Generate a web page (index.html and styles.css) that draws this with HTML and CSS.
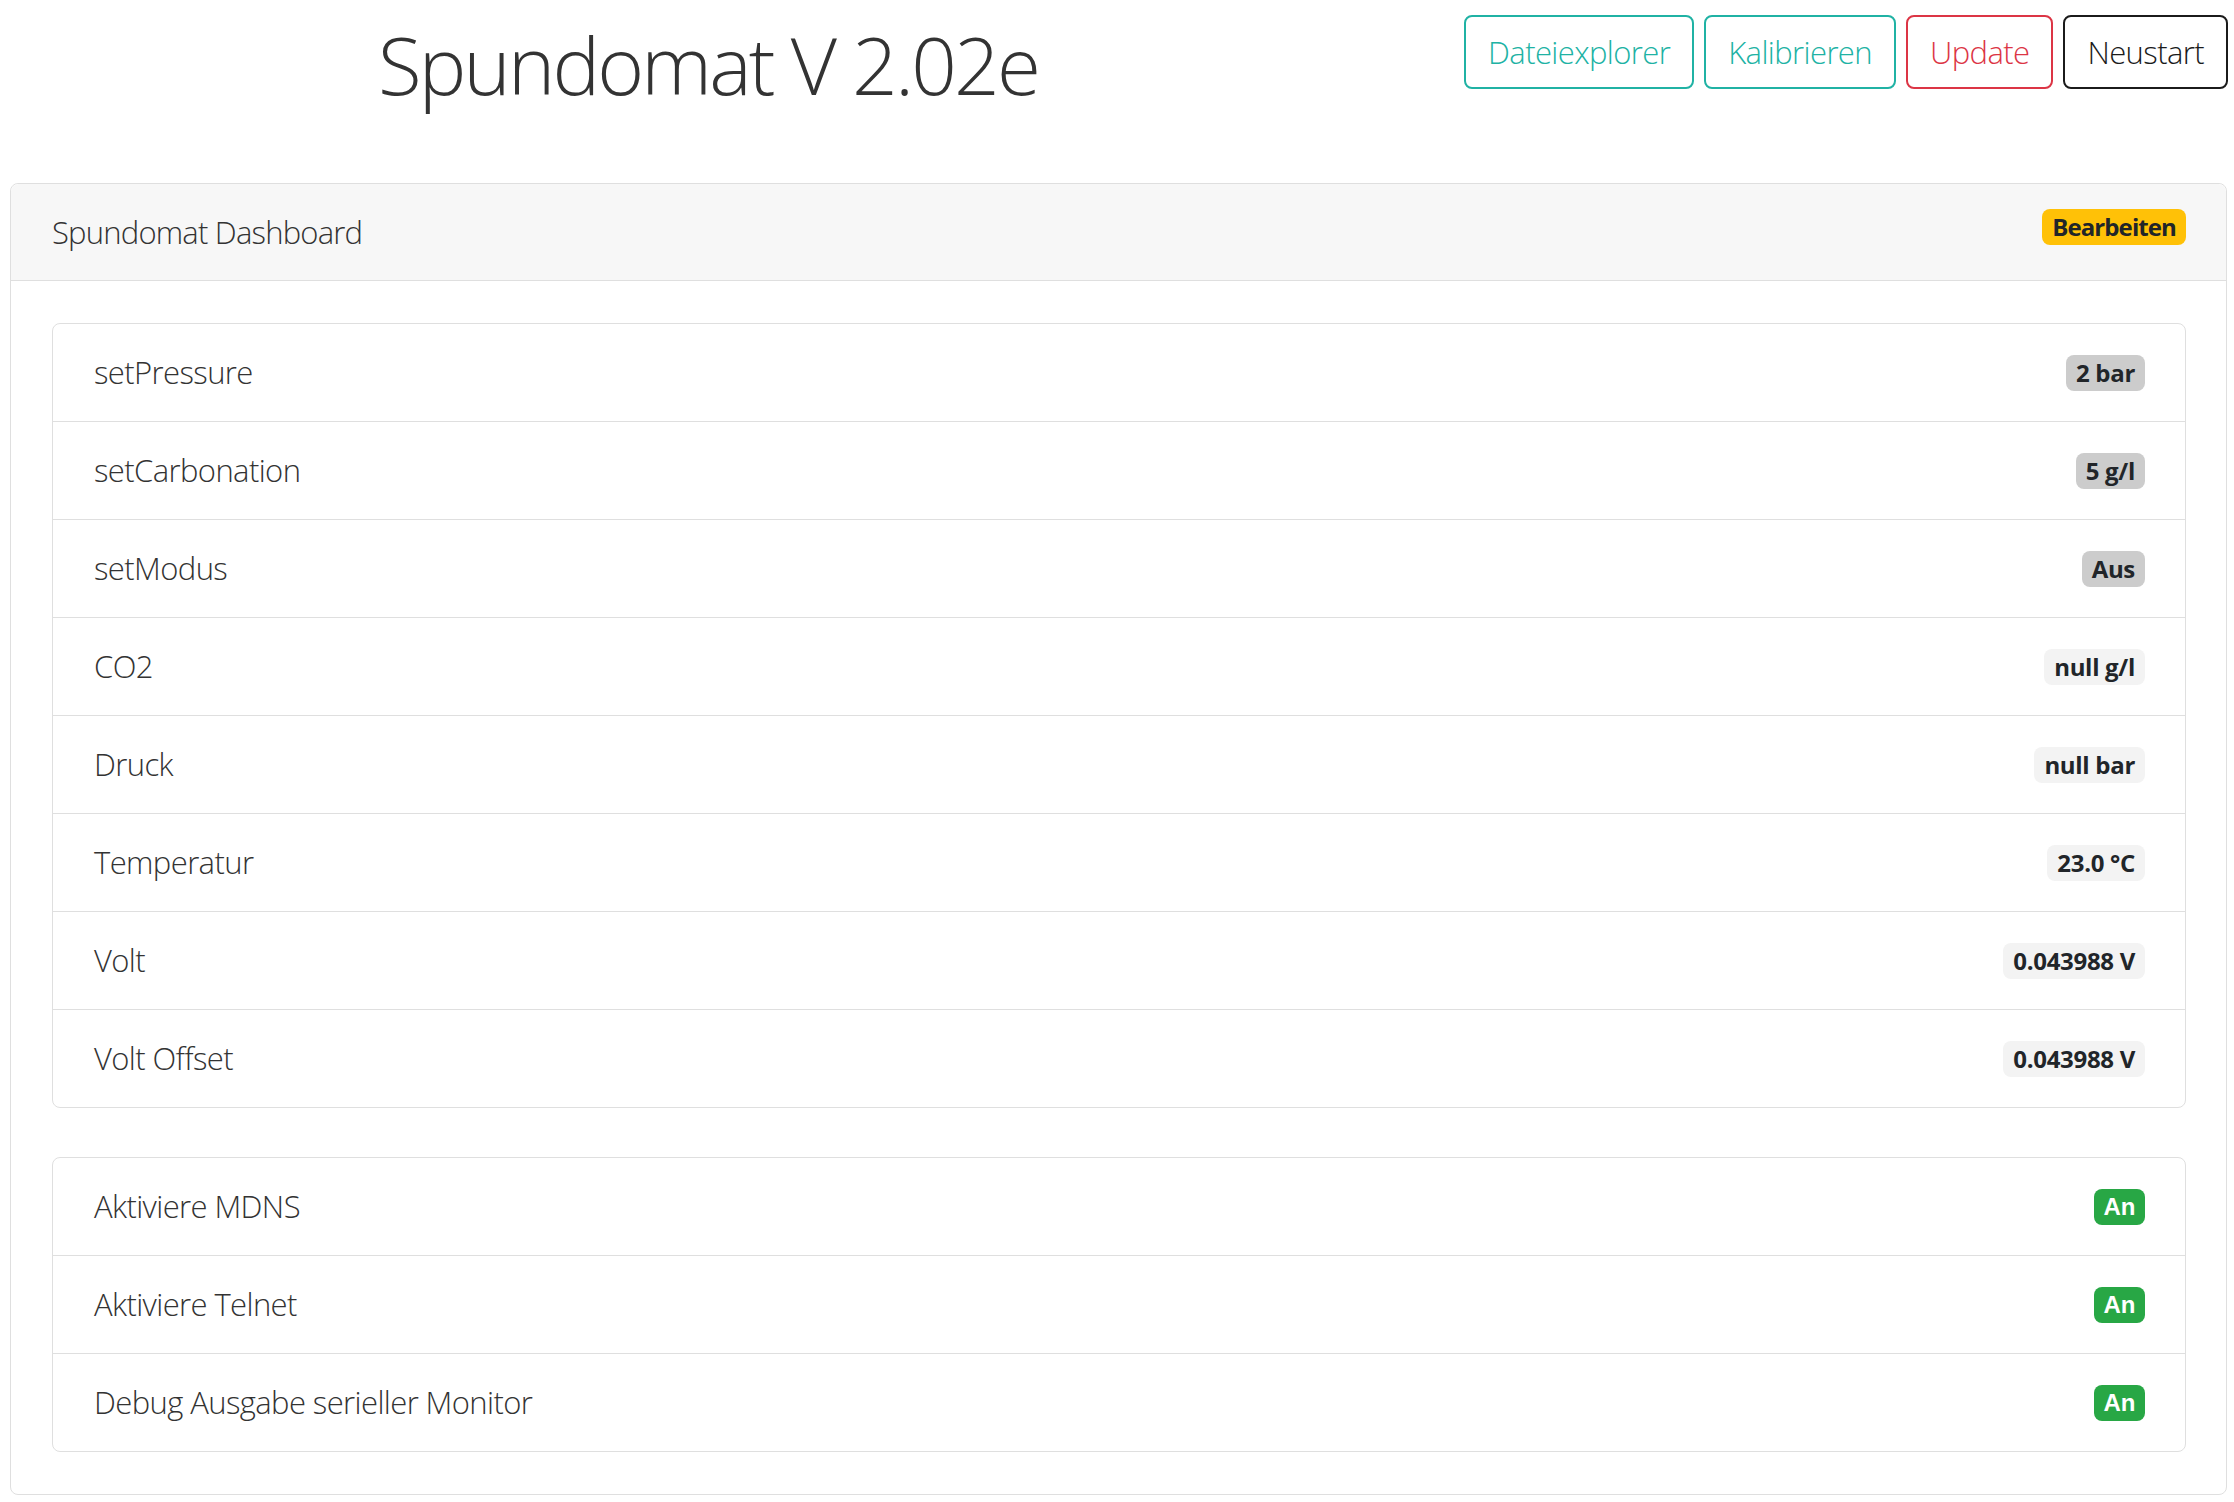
FILE: index.html
```html
<!DOCTYPE html>
<html lang="de">
<head>
<meta charset="utf-8">
<title>Spundomat V 2.02e</title>
<link rel="stylesheet" href="styles.css">
</head>
<body>
<div class="page">
  <header class="topbar">
    <h1 class="title">Spundomat V 2.02e</h1>
    <nav class="actions">
      <button class="btn btn-teal">Dateiexplorer</button>
      <button class="btn btn-teal">Kalibrieren</button>
      <button class="btn btn-red">Update</button>
      <button class="btn btn-dark">Neustart</button>
    </nav>
  </header>

  <section class="card">
    <div class="card-header">
      <span class="card-title">Spundomat Dashboard</span>
      <span class="badge badge-warning">Bearbeiten</span>
    </div>
    <div class="card-body">
      <ul class="list">
        <li class="item"><span class="label">setPressure</span><span class="badge badge-gray">2 bar</span></li>
        <li class="item"><span class="label">setCarbonation</span><span class="badge badge-gray">5 g/l</span></li>
        <li class="item"><span class="label">setModus</span><span class="badge badge-gray">Aus</span></li>
        <li class="item"><span class="label">CO2</span><span class="badge badge-light">null g/l</span></li>
        <li class="item"><span class="label">Druck</span><span class="badge badge-light">null bar</span></li>
        <li class="item"><span class="label">Temperatur</span><span class="badge badge-light">23.0 °C</span></li>
        <li class="item"><span class="label">Volt</span><span class="badge badge-light">0.043988 V</span></li>
        <li class="item"><span class="label">Volt Offset</span><span class="badge badge-light">0.043988 V</span></li>
      </ul>
      <ul class="list list-second">
        <li class="item"><span class="label">Aktiviere MDNS</span><span class="badge badge-success">An</span></li>
        <li class="item"><span class="label">Aktiviere Telnet</span><span class="badge badge-success">An</span></li>
        <li class="item"><span class="label">Debug Ausgabe serieller Monitor</span><span class="badge badge-success">An</span></li>
      </ul>
    </div>
  </section>
</div>
</body>
</html>
```

FILE: styles.css
```css
* { box-sizing: border-box; }

html, body {
  margin: 0;
  padding: 0;
  background: #ffffff;
}

body {
  font-family: "Open Sans", "Noto Sans", sans-serif;
  font-weight: 300;
  color: #333333;
  font-size: 31px;
}

.page {
  padding: 0 6px 0 10px;
}

/* ---------- top bar ---------- */
.topbar {
  display: flex;
  align-items: flex-start;
  padding-top: 15px;
}

.title {
  width: 1396px;
  margin: 1px 0 71px;
  text-align: center;
  font-size: 80px;
  font-weight: 300;
  line-height: 96px;
  letter-spacing: -2.8px;
  color: #333333;
}

.actions {
  flex: 1;
  display: flex;
  justify-content: flex-end;
  gap: 10px;
}

.btn {
  font-family: "Open Sans", "Noto Sans", sans-serif;
  font-weight: 300;
  font-size: 31px;
  line-height: 48px;
  letter-spacing: -0.6px;
  padding: 11px 22px;
  background: #ffffff;
  border: 2px solid currentColor;
  border-radius: 8px;
}

.btn-teal { color: #20b2a4; }
.btn-red { color: #dc3545; }
.btn-dark { color: #1b1b1b; }

/* ---------- card ---------- */
.card {
  margin-right: 1px;
  border: 1px solid #dfdfdf;
  border-radius: 8px;
  background: #ffffff;
}

.card-header {
  display: flex;
  justify-content: space-between;
  align-items: flex-start;
  padding: 24px 40px 24px 41px;
  line-height: 48px;
  background: #f7f7f7;
  border-bottom: 1px solid #dfdfdf;
  border-radius: 8px 8px 0 0;
}

.card-title {
  letter-spacing: -0.8px;
}

.card-body {
  padding: 42px 40px 42px 41px;
}

.list {
  list-style: none;
  margin: 0;
  padding: 0;
  border: 1px solid #dfdfdf;
  border-radius: 8px;
}

.list-second {
  margin-top: 49px;
}

.item {
  display: flex;
  justify-content: space-between;
  align-items: center;
  padding: 24px 40px 24px 41px;
  line-height: 49px;
}

.item + .item {
  border-top: 1px solid #dfdfdf;
}

.label {
  letter-spacing: -0.6px;
}

/* ---------- badges ---------- */
.badge {
  display: inline-block;
  font-family: "Open Sans", "Noto Sans", sans-serif;
  font-weight: 700;
  font-size: 24px;
  line-height: 24px;
  letter-spacing: -0.3px;
  padding: 6px 10px;
  border-radius: 8px;
  color: #212529;
  white-space: nowrap;
}

.badge-warning {
  background: #ffc107;
  letter-spacing: -0.9px;
  margin-top: 1px;
}
.badge-gray { background: #cccccc; }
.badge-light { background: #f3f3f3; }

.badge-success {
  background: #28a745;
  color: #ffffff;
  font-family: "Liberation Sans", Arial, sans-serif;
  font-size: 24px;
  letter-spacing: 0;
  padding: 6px 9.5px;
}
```
